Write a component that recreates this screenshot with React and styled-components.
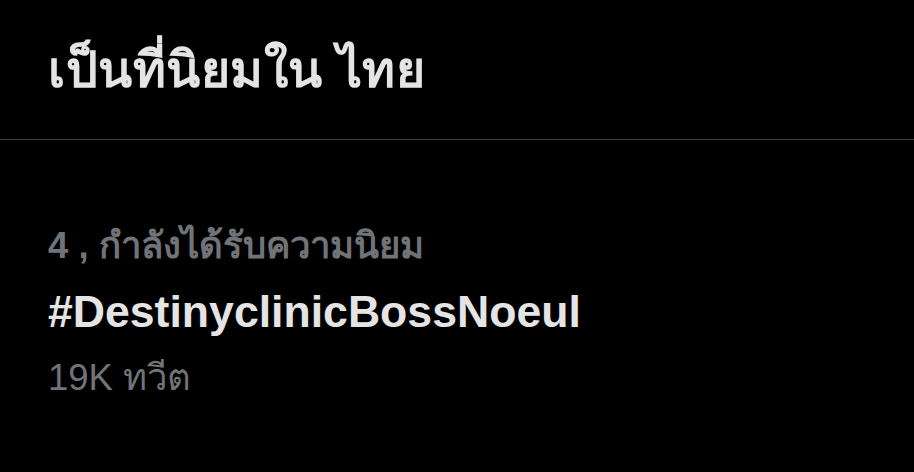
import React from 'react';
import styled, { createGlobalStyle } from 'styled-components';

const GlobalStyle = createGlobalStyle`
    html, body {
        margin: 0;
        padding: 0;
        background: #000;
    }
    body {
        font-family: "Liberation Sans", "Noto Sans", "DejaVu Sans", sans-serif;
    }
`

const Page = styled.div`
    width: 914px;
    height: 472px;
    background: #000;
    overflow: hidden;
`

const Header = styled.div`
    height: 140px;
    padding: 0 48px;
    display: flex;
    align-items: center;
    border-bottom: 1px solid #3a3a3c;
    box-sizing: border-box;
`

const Title = styled.h1`
    margin: 0;
    color: #e4e4e4;
    font-size: 50px;
    font-weight: 700;
    letter-spacing: 0.5px;
`

const Trend = styled.div`
    padding: 75px 48px 0;
    display: flex;
    flex-direction: column;
    gap: 4px;
`

const Meta = styled.div`
    color: #707478;
    font-size: 36.5px;
    font-weight: ${p => (p.bold ? 700 : 400)};
    line-height: 62px;
`

const Tag = styled.div`
    color: #e4e4e4;
    font-size: 44.6px;
    font-weight: 700;
    line-height: 62px;
`

const App = () => {
    return (<Page>
        <GlobalStyle />
        <Header>
            <Title>เป็นที่นิยมใน ไทย</Title>
        </Header>
        <Trend>
            <Meta bold>4 , กำลังได้รับความนิยม</Meta>
            <Tag>#DestinyclinicBossNoeul</Tag>
            <Meta>19K ทวีต</Meta>
        </Trend>
    </Page>);
}

export default App;
